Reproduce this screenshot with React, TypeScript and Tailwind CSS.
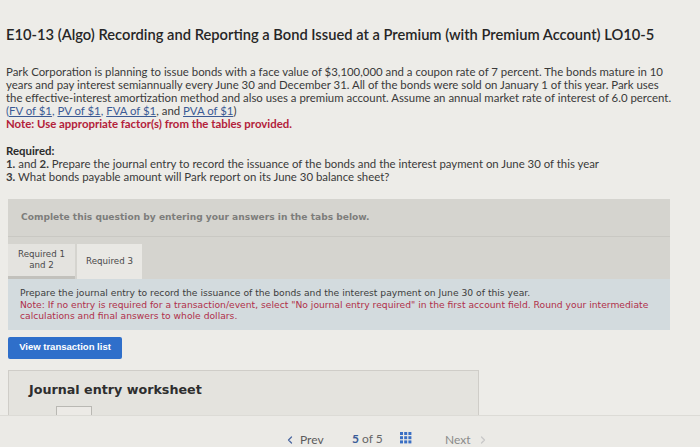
import { ChevronLeft, ChevronRight } from 'lucide-react';

const body = { fontFamily: 'Lato, "Liberation Sans", sans-serif' };
const verdana = { fontFamily: '"DejaVu Sans", Verdana, sans-serif' };

function GridIcon() {
  return (
    <svg width="12" height="12" viewBox="0 0 12 12">
      {[0, 1, 2].map((r) =>
        [0, 1, 2].map((c) => (
          <rect key={`${r}-${c}`} x={c * 4.2} y={r * 4.2} width="3" height="3" fill="#3a6fc4" />
        )),
      )}
    </svg>
  );
}

export default function App() {
  return (
    <div className="relative w-[700px] h-[447px] overflow-hidden bg-[#edece8] text-[#2b2b2b]" style={body}>
      <div className="px-[6px]">
        <h1 className="pt-[24px] text-[14.7px] leading-[20px] font-semibold text-[#262626] whitespace-nowrap">
          E10-13 (Algo) Recording and Reporting a Bond Issued at a Premium (with Premium Account) LO10-5
        </h1>

        <div className="mt-[21px] text-[11.4px] leading-[13px] text-[#3a3a3a] whitespace-nowrap">
          <div>Park Corporation is planning to issue bonds with a face value of $3,100,000 and a coupon rate of 7 percent. The bonds mature in 10</div>
          <div>years and pay interest semiannually every June 30 and December 31. All of the bonds were sold on January 1 of this year. Park uses</div>
          <div>the effective-interest amortization method and also uses a premium account. Assume an annual market rate of interest of 6.0 percent.</div>
          <div>
            <span className="text-[#3b5a94]">
              (<span className="underline">FV of $1</span>, <span className="underline">PV of $1</span>,{' '}
              <span className="underline">FVA of $1</span>
            </span>
            , and <span className="underline text-[#3b5a94]">PVA of $1</span>)
          </div>
          <div className="font-bold text-[#b3213a]">Note: Use appropriate factor(s) from the tables provided.</div>
        </div>

        <div className="mt-[14px] text-[11.4px] leading-[13px] text-[#3a3a3a] whitespace-nowrap">
          <div className="font-bold text-[#2b2b2b]">Required:</div>
          <div>
            <span className="font-bold">1.</span> and <span className="font-bold">2.</span> Prepare the journal entry to record the issuance of the bonds and the interest payment on June 30 of this year
          </div>
          <div>
            <span className="font-bold">3.</span> What bonds payable amount will Park report on its June 30 balance sheet?
          </div>
        </div>
      </div>

      <div className="mx-[8px] mt-[16px] w-[662px] bg-[#d5d4cf]" style={verdana}>
        <div className="h-[38px] flex items-center px-[13px] border-b border-[#c9c8c3] text-[9.1px] font-bold text-[#7d7d7b]">
          Complete this question by entering your answers in the tabs below.
        </div>
        <div className="flex items-end gap-[2px] pt-[6px] h-[42px]">
          <div className="w-[67px] h-[35px] flex items-center justify-center text-center bg-[#e4e3df] border-b-[3px] border-[#c2c1bc] text-[8.7px] leading-[11px] text-[#4a4a4a]">
            Required 1<br />and 2
          </div>
          <div className="w-[65px] h-[35px] flex items-center justify-center bg-[#e9e8e4] text-[8.7px] text-[#4a4a4a]">
            Required 3
          </div>
        </div>
        <div className="bg-[#d3dbde] px-[12px] pt-[8px] pb-[8px] text-[9.2px] leading-[11.5px] text-[#3d3d3d] whitespace-nowrap">
          <div>Prepare the journal entry to record the issuance of the bonds and the interest payment on June 30 of this year.</div>
          <div className="text-[#b0304a]">
            Note: If no entry is required for a transaction/event, select "No journal entry required" in the first account field. Round your intermediate
          </div>
          <div className="text-[#b0304a]">calculations and final answers to whole dollars.</div>
        </div>
      </div>

      <div
        className="ml-[8px] mt-[7px] w-[114px] h-[22px] rounded-[2px] bg-[#2f6fca] flex items-center justify-center text-white text-[9.5px] font-bold"
        style={{ fontFamily: '"Liberation Sans", Arial, sans-serif' }}
      >
        View transaction list
      </div>

      <div className="relative ml-[8px] mt-[11px] w-[471px] h-[60px] bg-[#e4e3de] border border-[#cfcdc8]" style={verdana}>
        <div className="pl-[20px] pt-[9px] text-[12.7px] font-bold text-[#2e2e2e]">Journal entry worksheet</div>
        <div className="absolute left-[47px] top-[35px] w-[36px] h-[14px] border border-[#b9b8b3] bg-[#eceae6]" />
      </div>

      <div className="absolute left-0 bottom-0 w-full h-[32px] bg-[#ebeae6] border-t border-[#dcdbd6] text-[12px]" style={body}>
        <div className="absolute left-[284px] top-[15px] flex items-center gap-[4px] text-[#5b5b5b]">
          <ChevronLeft size={12} strokeWidth={2.5} className="text-[#4a67a0]" />
          <span>Prev</span>
        </div>
        <div className="absolute left-[352px] top-[14px] text-[#666]">
          <span className="font-bold text-[#3a5c98]">5</span> of 5
        </div>
        <div className="absolute left-[400px] top-[16px]">
          <GridIcon />
        </div>
        <div className="absolute left-[445px] top-[15px] flex items-center gap-[6px] text-[#8a8a8a]">
          <span>Next</span>
          <ChevronRight size={12} strokeWidth={2.5} className="text-[#c8c8c8]" />
        </div>
      </div>
    </div>
  );
}
